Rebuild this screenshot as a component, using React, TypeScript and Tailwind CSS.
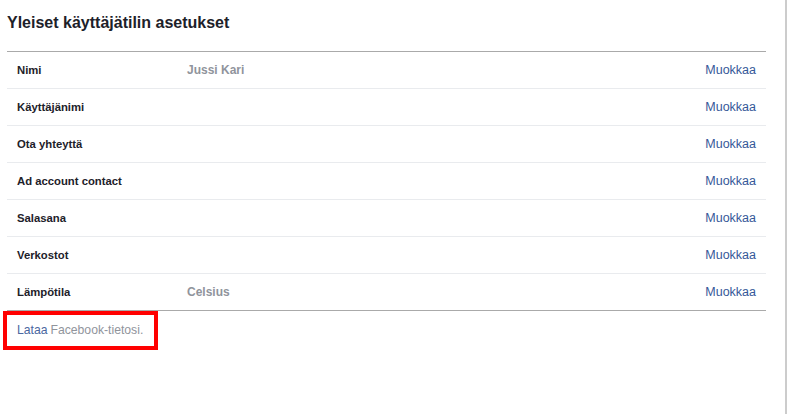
const rows: { label: string; value?: string }[] = [
  { label: 'Nimi', value: 'Jussi Kari' },
  { label: 'Käyttäjänimi' },
  { label: 'Ota yhteyttä' },
  { label: 'Ad account contact' },
  { label: 'Salasana' },
  { label: 'Verkostot' },
  { label: 'Lämpötila', value: 'Celsius' },
]

export default function App() {
  return (
    <div className="w-[787px] h-[414px] bg-white border-r-2 border-[#cccccc] font-['Liberation_Sans',Arial,sans-serif]">
      <div className="pl-[7px] pr-[19px]">
        {/* Header */}
        <div className="h-[51px] flex items-center pb-[6px]">
          <h2 className="text-[16px] font-bold text-[#1d2129] leading-5">Yleiset käyttäjätilin asetukset</h2>
        </div>

        {/* Settings list */}
        <div className="border-t border-b border-[#aaaaaa]">
          {rows.map((row, idx) => (
            <div
              key={row.label}
              className={`flex items-center px-[10px] ${idx > 0 ? 'border-t border-[#e9ebee] h-[37px]' : 'h-[36px]'}`}
            >
              <div className="w-[170px] text-[11.3px] font-bold text-[#1d2129]">{row.label}</div>
              <div className="flex-1 text-[12px] font-bold text-[#90949c]">{row.value}</div>
              <a className="text-[12.5px] text-[#365899]">Muokkaa</a>
            </div>
          ))}
        </div>

        {/* Footer */}
        <div className="ml-[-4px] w-[155px] h-[39px] border-4 border-[#ff0000] pl-[10px] flex items-center text-[12.2px]">
          <span className="text-[#4b67a1]">Lataa</span>
          <span className="ml-[3px] text-[#90949c]">Facebook-tietosi.</span>
        </div>
      </div>
    </div>
  )
}
